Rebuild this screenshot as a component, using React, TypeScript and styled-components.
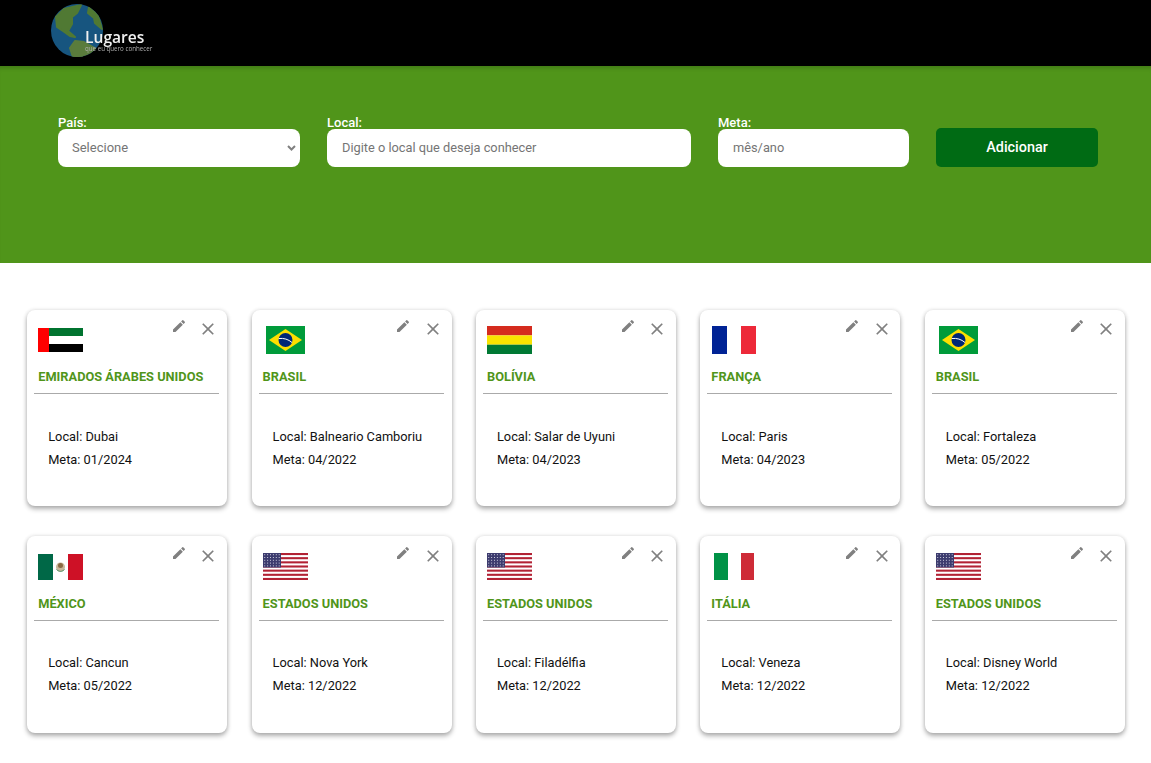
import styled, { createGlobalStyle } from "styled-components";

const GlobalStyle = createGlobalStyle`
  body {
    margin: 0;
    background: #fff;
    font-family: "Roboto", sans-serif;
  }
`;

type FlagCode = "ae" | "br" | "bo" | "fr" | "mx" | "us" | "it";

const PLACES: { country: string; flag: FlagCode; local: string; meta: string }[] = [
  { country: "Emirados Árabes Unidos", flag: "ae", local: "Dubai", meta: "01/2024" },
  { country: "Brasil", flag: "br", local: "Balneario Camboriu", meta: "04/2022" },
  { country: "Bolívia", flag: "bo", local: "Salar de Uyuni", meta: "04/2023" },
  { country: "França", flag: "fr", local: "Paris", meta: "04/2023" },
  { country: "Brasil", flag: "br", local: "Fortaleza", meta: "05/2022" },
  { country: "México", flag: "mx", local: "Cancun", meta: "05/2022" },
  { country: "Estados Unidos", flag: "us", local: "Nova York", meta: "12/2022" },
  { country: "Estados Unidos", flag: "us", local: "Filadélfia", meta: "12/2022" },
  { country: "Itália", flag: "it", local: "Veneza", meta: "12/2022" },
  { country: "Estados Unidos", flag: "us", local: "Disney World", meta: "12/2022" },
];

const Flag = ({ code }: { code: FlagCode }) => {
  if (code === "ae") {
    return (
      <svg width="45" height="24" viewBox="0 0 45 24">
        <rect width="45" height="8" fill="#00732f" />
        <rect y="8" width="45" height="8" fill="#fff" />
        <rect y="16" width="45" height="8" fill="#000" />
        <rect width="11" height="24" fill="#f00" />
      </svg>
    );
  }
  if (code === "br") {
    return (
      <svg width="39" height="28" viewBox="0 0 39 28">
        <rect width="39" height="28" fill="#009b3a" />
        <polygon points="19.5,3 36,14 19.5,25 3,14" fill="#fedf00" />
        <circle cx="19.5" cy="14" r="7" fill="#002776" />
        <path d="M12.8 12.5c5-.6 9.5.8 13.2 4" fill="none" stroke="#fff" strokeWidth="1" />
      </svg>
    );
  }
  if (code === "bo") {
    return (
      <svg width="45" height="28" viewBox="0 0 45 28">
        <rect width="45" height="9.4" fill="#d52b1e" />
        <rect y="9.4" width="45" height="9.3" fill="#f9e300" />
        <rect y="18.7" width="45" height="9.3" fill="#007934" />
      </svg>
    );
  }
  if (code === "fr") {
    return (
      <svg width="44" height="28" viewBox="0 0 44 28">
        <rect width="15" height="28" fill="#002395" />
        <rect x="15" width="14" height="28" fill="#fff" />
        <rect x="29" width="15" height="28" fill="#ed2939" />
      </svg>
    );
  }
  if (code === "mx") {
    return (
      <svg width="45" height="26" viewBox="0 0 45 26">
        <rect width="15" height="26" fill="#006847" />
        <rect x="30" width="15" height="26" fill="#ce1126" />
        <ellipse cx="22.5" cy="13" rx="4.5" ry="4.5" fill="#c9b79a" />
        <ellipse cx="22.5" cy="11.5" rx="2.5" ry="2.5" fill="#8a6a42" />
        <path d="M18.5 15.5c2.5 2.5 5.5 2.5 8 0" fill="none" stroke="#3f8a5c" strokeWidth="1" />
      </svg>
    );
  }
  if (code === "it") {
    return (
      <svg width="40" height="27" viewBox="0 0 40 27">
        <rect width="14" height="27" fill="#009246" />
        <rect x="14" width="13" height="27" fill="#fff" />
        <rect x="27" width="13" height="27" fill="#ce2b37" />
      </svg>
    );
  }
  return (
    <svg width="45" height="27" viewBox="0 0 45 27">
      <rect width="45" height="27" fill="#fff" />
      {Array.from({ length: 7 }, (_, i) => (
        <rect key={i} y={i * 4.154} width="45" height="2.077" fill="#b22234" />
      ))}
      <rect width="18" height="14.5" fill="#3c3b6e" />
      {Array.from({ length: 5 }, (_, row) =>
        Array.from({ length: 6 }, (_, col) => (
          <rect key={`${row}-${col}`} x={1.2 + col * 2.9} y={1.2 + row * 2.8} width="1" height="1" fill="#c9c9dc" />
        ))
      )}
    </svg>
  );
};

const PlaceCard = ({ country, flag, local, meta }: (typeof PLACES)[number]) => (
  <Card>
    <CardTop>
      <FlagBox>
        <Flag code={flag} />
      </FlagBox>
      <CardActions>
        <IconButton aria-label="editar">
          <svg width="16" height="16" viewBox="0 0 24 24" fill="#808080">
            <path d="M3 17.25V21h3.75L17.81 9.94l-3.75-3.75L3 17.25zM20.71 7.04c.39-.39.39-1.02 0-1.41l-2.34-2.34a.9959.9959 0 0 0-1.41 0l-1.83 1.83 3.75 3.75 1.83-1.83z" />
          </svg>
        </IconButton>
        <IconButton aria-label="excluir" $low>
          <svg width="20" height="20" viewBox="0 0 24 24" fill="#808080">
            <path d="M19 6.41 17.59 5 12 10.59 6.41 5 5 6.41 10.59 12 5 17.59 6.41 19 12 13.41 17.59 19 19 17.59 13.41 12z" />
          </svg>
        </IconButton>
      </CardActions>
    </CardTop>
    <CountryName>{country}</CountryName>
    <Divider />
    <CardBody>
      <InfoLine>Local: {local}</InfoLine>
      <InfoLine>Meta: {meta}</InfoLine>
    </CardBody>
  </Card>
);

export default function App() {
  return (
    <>
      <GlobalStyle />
      <Header>
        <Logo>
          <GlobeArt width="52" height="53" viewBox="0 0 52 53">
            <defs>
              <clipPath id="globe">
                <ellipse cx="26" cy="26.5" rx="26" ry="26.5" />
              </clipPath>
            </defs>
            <g clipPath="url(#globe)" strokeLinejoin="round" strokeWidth="2">
              <rect width="52" height="53" fill="#1c6496" />
              <path d="M5 13 13 5 30 1 26 9 21 13 21 20 17 27 24 33 19 32 12 27 6 23Z" fill="#5f8f3c" stroke="#5f8f3c" />
              <path d="M38 3 47 12 51 25 44 19 43 14 37 9Z" fill="#5f8f3c" stroke="#5f8f3c" />
              <path d="M24 37 33 38 47 46 37 53 22 53 19 44Z" fill="#6a9247" stroke="#6a9247" />
            </g>
          </GlobeArt>
          <LogoTitle>Lugares</LogoTitle>
          <LogoSubtitle>que eu quero conhecer</LogoSubtitle>
        </Logo>
      </Header>
      <FormSection>
        <FormRow>
          <Field>
            <FieldLabel>País:</FieldLabel>
            <SelectBox defaultValue="">
              <option value="" disabled>
                Selecione
              </option>
              <option value="br">Brasil</option>
            </SelectBox>
          </Field>
          <Field>
            <FieldLabel>Local:</FieldLabel>
            <TextBox placeholder="Digite o local que deseja conhecer" />
          </Field>
          <Field>
            <FieldLabel>Meta:</FieldLabel>
            <TextBox placeholder="mês/ano" />
          </Field>
          <AddButton>Adicionar</AddButton>
        </FormRow>
      </FormSection>
      <CardGrid>
        {PLACES.map((place) => (
          <PlaceCard key={place.local} {...place} />
        ))}
      </CardGrid>
    </>
  );
}

const Header = styled.header`
  display: flex;
  align-items: flex-start;
  height: 66px;
  padding-left: 51px;
  background: #000;
`;

const Logo = styled.div`
  position: relative;
  width: 105px;
  padding-top: 4px;
`;

const GlobeArt = styled.svg`
  display: block;
  opacity: 0.85;
  filter: blur(0.7px);
`;

const LogoTitle = styled.span`
  position: absolute;
  left: 34px;
  top: 29px;
  font-family: "Open Sans", sans-serif;
  font-size: 15.6px;
  font-weight: 600;
  line-height: 16px;
  color: #f0f0f0;
  filter: blur(0.3px);
`;

const LogoSubtitle = styled.span`
  position: absolute;
  left: 34px;
  top: 45px;
  font-family: "Open Sans", sans-serif;
  font-size: 6.2px;
  line-height: 8px;
  white-space: nowrap;
  color: #b0b0b0;
  filter: blur(0.2px);
`;

const FormSection = styled.section`
  height: 197px;
  padding: 50px 0 0 58px;
  box-sizing: border-box;
  background: #50951a;
  box-shadow: inset 0 5px 4px -3px rgba(0, 0, 0, 0.18);
`;

const FormRow = styled.form`
  display: grid;
  grid-template-columns: 242px 364px 191px 162px;
  column-gap: 27px;
  align-items: end;
`;

const Field = styled.label`
  display: flex;
  flex-direction: column;
`;

const FieldLabel = styled.span`
  font-size: 13px;
  font-weight: 500;
  line-height: 13px;
  color: #fff;
`;

const SelectBox = styled.select`
  height: 38px;
  padding: 0 14px 2px;
  border: none;
  border-radius: 8px;
  appearance: none;
  background: #fff
    url("data:image/svg+xml,%3Csvg xmlns='http://www.w3.org/2000/svg' width='9' height='6'%3E%3Cpath d='M1 1l3.5 3.5L8 1' fill='none' stroke='%23808080' stroke-width='2'/%3E%3C/svg%3E")
    no-repeat right 4px center;
  font-family: "Roboto", sans-serif;
  font-size: 13px;
  color: #757575;
  outline: none;
`;

const TextBox = styled.input`
  height: 38px;
  padding: 0 15px 2px;
  box-sizing: border-box;
  border: none;
  border-radius: 8px;
  background: #fff;
  font-family: "Roboto", sans-serif;
  font-size: 12.8px;
  outline: none;

  &::placeholder {
    color: #757575;
    opacity: 1;
  }
`;

const AddButton = styled.button`
  height: 39px;
  padding: 0;
  border: none;
  border-radius: 5px;
  background: #006b14;
  font-family: "Roboto", sans-serif;
  font-size: 14.4px;
  font-weight: 500;
  color: #fff;
  cursor: pointer;
`;

const CardGrid = styled.main`
  display: grid;
  grid-template-columns: repeat(5, 200px);
  column-gap: 24.4px;
  row-gap: 30px;
  padding: 46.5px 0 30px 27.2px;
`;

const Card = styled.article`
  height: 196.5px;
  box-sizing: border-box;
  padding: 16.5px 8px 0 7px;
  border-radius: 8px;
  background: #fff;
  box-shadow: 0 3px 5px rgba(0, 0, 0, 0.3), 0 0 4px rgba(0, 0, 0, 0.12);
`;

const CardTop = styled.div`
  display: flex;
  justify-content: space-between;
  height: 28px;
  padding-left: 4px;
`;

const FlagBox = styled.div`
  display: flex;
  align-items: center;
  justify-content: center;
  width: 45px;
  height: 28px;

  svg {
    display: block;
  }
`;

const CardActions = styled.div`
  display: flex;
  align-items: flex-start;
  gap: 11.4px;
  margin-right: 0.8px;
`;

const IconButton = styled.button<{ $low?: boolean }>`
  display: block;
  padding: 0;
  margin-top: ${({ $low }) => ($low ? "-7px" : "-8px")};
  border: none;
  background: none;
  cursor: pointer;

  svg {
    display: block;
  }
`;

const CountryName = styled.h3`
  margin: 14px 0 0;
  padding-left: 4px;
  font-size: 12.8px;
  font-weight: 700;
  line-height: 18px;
  text-transform: uppercase;
  color: #50951a;
`;

const Divider = styled.hr`
  height: 1px;
  margin: 7px 0 0;
  border: none;
  background: #aaa;
`;

const CardBody = styled.div`
  display: flex;
  flex-direction: column;
  gap: 8px;
  padding: 34.5px 0 0 14px;
`;

const InfoLine = styled.p`
  margin: 0;
  font-size: 12.8px;
  line-height: 15.4px;
  color: #111;
`;
